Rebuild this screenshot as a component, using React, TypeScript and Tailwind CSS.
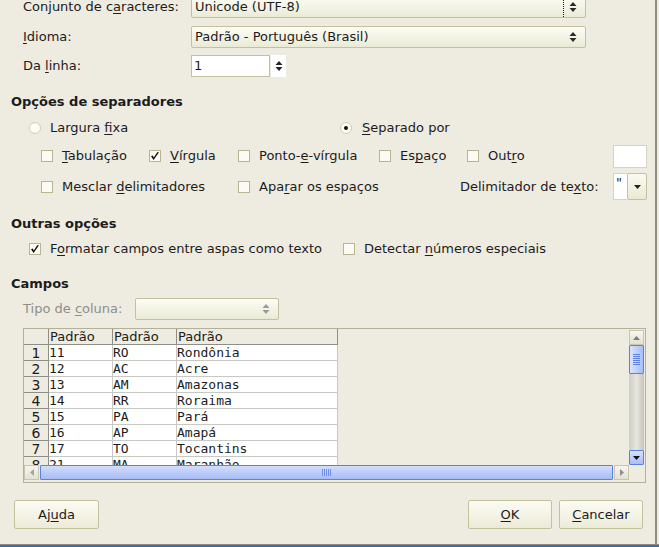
import React from "react";

const ink = "text-[#1c1c1c]";

function Arrows({ color = "#2b2b2b" }: { color?: string }) {
  return (
    <svg width="8" height="12" viewBox="0 0 8 12">
      <path d="M0.5 5 L4 1 L7.5 5 Z M0.5 7 L4 11 L7.5 7 Z" fill={color} />
    </svg>
  );
}

function Combo({
  className,
  children,
  focus,
  disabled,
}: {
  className: string;
  children?: React.ReactNode;
  focus?: boolean;
  disabled?: boolean;
}) {
  return (
    <div
      className={`flex items-center rounded-[2px] border border-[#c4c29d] bg-gradient-to-b from-[#fcfcf5] to-[#eaebd6] ${className}`}
    >
      <div className="flex-1 truncate pl-[3px]">{children}</div>
      <div
        className={`flex h-full items-center pr-[8px] pl-[5px] ${
          focus ? "border-l border-dotted border-l-[#222]" : ""
        }`}
      >
        <Arrows color={disabled ? "#9a9a9a" : "#2b2b2b"} />
      </div>
    </div>
  );
}

function Check({ checked }: { checked?: boolean }) {
  return (
    <span className="flex h-[12px] w-[12px] shrink-0 items-center justify-center border border-[#b7b592] bg-[#fbfbf4]">
      {checked && (
        <svg width="8" height="8" viewBox="0 0 8 8">
          <path d="M0 4.2 L2.6 8 L8 0.3 L6.2 0.3 L2.8 5.4 L1.8 3.4 Z" fill="#111" />
        </svg>
      )}
    </span>
  );
}

function Radio({ on }: { on?: boolean }) {
  return (
    <span className="flex h-[12px] w-[12px] shrink-0 items-center justify-center rounded-full border border-[#cfcdb0] bg-[#fdfdf8]">
      {on && <span className="h-[4px] w-[4px] rounded-full bg-[#111]" />}
    </span>
  );
}

function Opt({
  className,
  checked,
  children,
}: {
  className: string;
  checked?: boolean;
  children: React.ReactNode;
}) {
  return (
    <div className={`flex items-center gap-[9px] ${className}`}>
      <Check checked={checked} />
      <span>{children}</span>
    </div>
  );
}

function Btn({ className, children }: { className: string; children: React.ReactNode }) {
  return (
    <div
      className={`flex h-[29px] items-center justify-center rounded-[2px] border border-[#c4c29d] bg-gradient-to-b from-[#fbfbf3] to-[#ecebd9] ${className}`}
    >
      {children}
    </div>
  );
}

const rows = [
  ["1", "11", "RO", "Rondônia"],
  ["2", "12", "AC", "Acre"],
  ["3", "13", "AM", "Amazonas"],
  ["4", "14", "RR", "Roraima"],
  ["5", "15", "PA", "Pará"],
  ["6", "16", "AP", "Amapá"],
  ["7", "17", "TO", "Tocantins"],
  ["8", "21", "MA", "Maranhão"],
];

function Table() {
  return (
    <div className="ml-[23px] mt-[8px] flex h-[155px] w-[623px] border border-[#b4b19a] bg-[#eeebe1]">
      <div className="flex w-[605px] flex-col">
        <div className="h-[136px] overflow-hidden">
          <div className="grid grid-cols-[25px_64px_64px_161px] w-[314px]">
            <div className="h-[16px] border-r border-b border-[#8e8e88] bg-[#eeebe1]" />
            {["Padrão", "Padrão", "Padrão"].map((h, i) => (
              <div
                key={i}
                className="h-[16px] border-r border-b border-[#8e8e88] bg-[#eeebe1] pl-[1px] leading-[16px]"
              >
                {h}
              </div>
            ))}
            {rows.map((r) => (
              <React.Fragment key={r[0]}>
                <div className="h-[16px] border-r border-b border-[#8e8e88] bg-[#eeebe1] text-center leading-[16px] text-[14px]">
                  {r[0]}
                </div>
                {r.slice(1).map((c, i) => (
                  <div
                    key={i}
                    className="h-[16px] border-r border-b border-[#c9c9c4] bg-white font-['DejaVu_Sans_Mono',monospace] text-[13px] leading-[16px]"
                  >
                    {c}
                  </div>
                ))}
              </React.Fragment>
            ))}
          </div>
        </div>
        <div className="flex h-[15px]">
          <div className="flex w-[15px] items-center justify-center border border-[#c9c6ae] bg-gradient-to-b from-[#f6f5ee] to-[#e4e2d4]">
            <svg width="4" height="7" viewBox="0 0 4 7">
              <path d="M4 0 L0 3.5 L4 7 Z" fill="#a5a59d" />
            </svg>
          </div>
          <div className="ml-[1px] flex w-[573px] items-center justify-center rounded-[1px] border border-[#5a80e0] bg-gradient-to-b from-[#d3defc] to-[#a7bbf5]">
            <div className="flex gap-[1px]">
              {[0, 1, 2, 3, 4].map((i) => (
                <span key={i} className="h-[7px] w-[1px] bg-[#6f8fe6]" />
              ))}
            </div>
          </div>
          <div className="ml-[1px] flex w-[15px] items-center justify-center border border-[#c9c6ae] bg-gradient-to-b from-[#f6f5ee] to-[#e4e2d4]">
            <svg width="4" height="7" viewBox="0 0 4 7">
              <path d="M0 0 L4 3.5 L0 7 Z" fill="#8f8f88" />
            </svg>
          </div>
        </div>
      </div>
      <div className="flex w-[15px] flex-col pt-[1px]">
        <div className="flex h-[15px] items-center justify-center border border-[#c9c6ae] bg-gradient-to-b from-[#f8f7f0] to-[#e2e0d2]">
          <svg width="7" height="4" viewBox="0 0 7 4">
            <path d="M0 4 L3.5 0 L7 4 Z" fill="#7d7d76" />
          </svg>
        </div>
        <div className="flex h-[29px] items-center justify-center rounded-[1px] border border-[#5a80e0] bg-gradient-to-r from-[#dbe4fd] to-[#a9bdf6]">
          <div className="flex flex-col gap-[1px]">
            {[0, 1, 2, 3, 4, 5].map((i) => (
              <span key={i} className="h-[1px] w-[7px] bg-[#5f82e2]" />
            ))}
          </div>
        </div>
        <div className="h-[76px] bg-gradient-to-r from-[#cdcdc4] via-[#e6e6df] to-[#c4c4bb]" />
        <div className="flex h-[15px] items-center justify-center rounded-[1px] border border-[#5a80e0] bg-gradient-to-b from-[#d7e0fc] to-[#a9bdf6]">
          <svg width="7" height="4" viewBox="0 0 7 4">
            <path d="M0 0 L3.5 4 L7 0 Z" fill="#111" />
          </svg>
        </div>
      </div>
    </div>
  );
}

export default function App() {
  return (
    <div
      className={`flex h-[547px] w-[659px] flex-col overflow-hidden bg-[#eeebe1] font-['DejaVu_Sans',sans-serif] text-[13px] ${ink}`}
    >
      <div className="h-[544px] w-[657px] border-r-2 border-[#8d8b82]">
        {/* top selectors */}
        <div className="-mt-[4px] flex h-[22px] items-center pl-[23px]">
          <span className="w-[168px]">
            Conjunto de c<u className="underline-offset-2">a</u>racteres:
          </span>
          <Combo className="h-[22px] w-[395px]" focus>
            Unicode (UTF-8)
          </Combo>
        </div>
        <div className="mt-[8px] flex h-[22px] items-center pl-[23px]">
          <span className="w-[168px]">
            <u className="underline-offset-2">I</u>dioma:
          </span>
          <Combo className="h-[22px] w-[395px]">Padrão - Português (Brasil)</Combo>
        </div>
        <div className="mt-[7px] flex h-[22px] items-center pl-[23px]">
          <span className="w-[168px]">
            Da <u className="underline-offset-2">l</u>inha:
          </span>
          <div className="flex h-[22px] w-[79px] items-center border border-[#c4c29d] bg-white pl-[2px]">
            1
          </div>
          <div className="ml-[1px] flex h-[22px] w-[15px] items-center justify-center bg-white">
            <Arrows color="#222" />
          </div>
        </div>

        {/* separators */}
        <div className="mt-[16px] h-[18px] pl-[11px] font-bold leading-[18px]">
          Opções de separadores
        </div>
        <div className="mt-[8px] flex h-[18px] items-center pl-[29px]">
          <div className="flex w-[311px] items-center gap-[9px]">
            <Radio />
            <span>
              Largura <u className="underline-offset-2">f</u>ixa
            </span>
          </div>
          <div className="flex items-center gap-[10px]">
            <Radio on />
            <span>
              <u className="underline-offset-2">S</u>eparado por
            </span>
          </div>
        </div>
        <div className="mt-[8px] flex h-[22px] items-center pl-[41px]">
          <Opt className="w-[108px]">
            <u className="underline-offset-2">T</u>abulação
          </Opt>
          <Opt className="w-[89px]" checked>
            <u className="underline-offset-2">V</u>írgula
          </Opt>
          <Opt className="w-[141px]">
            Ponto-<u className="underline-offset-2">e</u>-vírgula
          </Opt>
          <Opt className="w-[88px]">
            Es<u className="underline-offset-2">p</u>aço
          </Opt>
          <Opt className="w-[146px]">
            Out<u className="underline-offset-2">r</u>o
          </Opt>
          <div className="h-[23px] w-[34px] border border-[#d6d4bc] bg-white" />
        </div>
        <div className="mt-[6px] flex h-[27px] items-center pl-[41px]">
          <Opt className="w-[197px]">
            Mesclar <u className="underline-offset-2">d</u>elimitadores
          </Opt>
          <Opt className="w-[222px]">
            Apa<u className="underline-offset-2">r</u>ar os espaços
          </Opt>
          <span className="w-[153px]">
            Delimitador de te<u className="underline-offset-2">x</u>to:
          </span>
          <div className="flex h-[27px] w-[34px]">
            <div className="w-[14px] border-y border-l border-[#d6d4bc] bg-white pl-[2px] pt-[1px] leading-[16px]">
              "
            </div>
            <div className="flex w-[20px] items-center justify-center rounded-[2px] border border-[#c4c29d] bg-gradient-to-b from-[#fbfbf4] to-[#e9e9d4]">
              <svg width="7" height="4" viewBox="0 0 7 4">
                <path d="M0 0 L3.5 4 L7 0 Z" fill="#222" />
              </svg>
            </div>
          </div>
        </div>

        {/* other options */}
        <div className="mt-[15px] h-[18px] pl-[11px] font-bold leading-[18px]">Outras opções</div>
        <div className="mt-[7px] flex h-[18px] items-center pl-[29px]">
          <Opt className="w-[314px]" checked>
            F<u className="underline-offset-2">o</u>rmatar campos entre aspas como texto
          </Opt>
          <Opt className="w-[250px]">
            Detectar <u className="underline-offset-2">n</u>úmeros especiais
          </Opt>
        </div>

        {/* fields */}
        <div className="mt-[17px] h-[18px] pl-[11px] font-bold leading-[18px]">Campos</div>
        <div className="mt-[5px] flex h-[22px] items-center pl-[23px]">
          <span className="w-[112px] text-[#8e8e8a]">
            Tipo de <u className="underline-offset-2">c</u>oluna:
          </span>
          <Combo className="h-[22px] w-[144px]" disabled />
        </div>
        <Table />

        {/* buttons */}
        <div className="mt-[17px] flex pl-[14px]">
          <Btn className="w-[85px]">
            Aj<u className="underline-offset-2">u</u>da
          </Btn>
          <Btn className="ml-auto w-[84px]">
            <u className="underline-offset-2">O</u>K
          </Btn>
          <Btn className="ml-[7px] mr-[12px] w-[84px]">
            <u className="underline-offset-2">C</u>ancelar
          </Btn>
        </div>
      </div>
      <div className="h-[1px] bg-[#8d8b82]" />
      <div className="flex-1 bg-[#3a6ea5]" />
    </div>
  );
}
